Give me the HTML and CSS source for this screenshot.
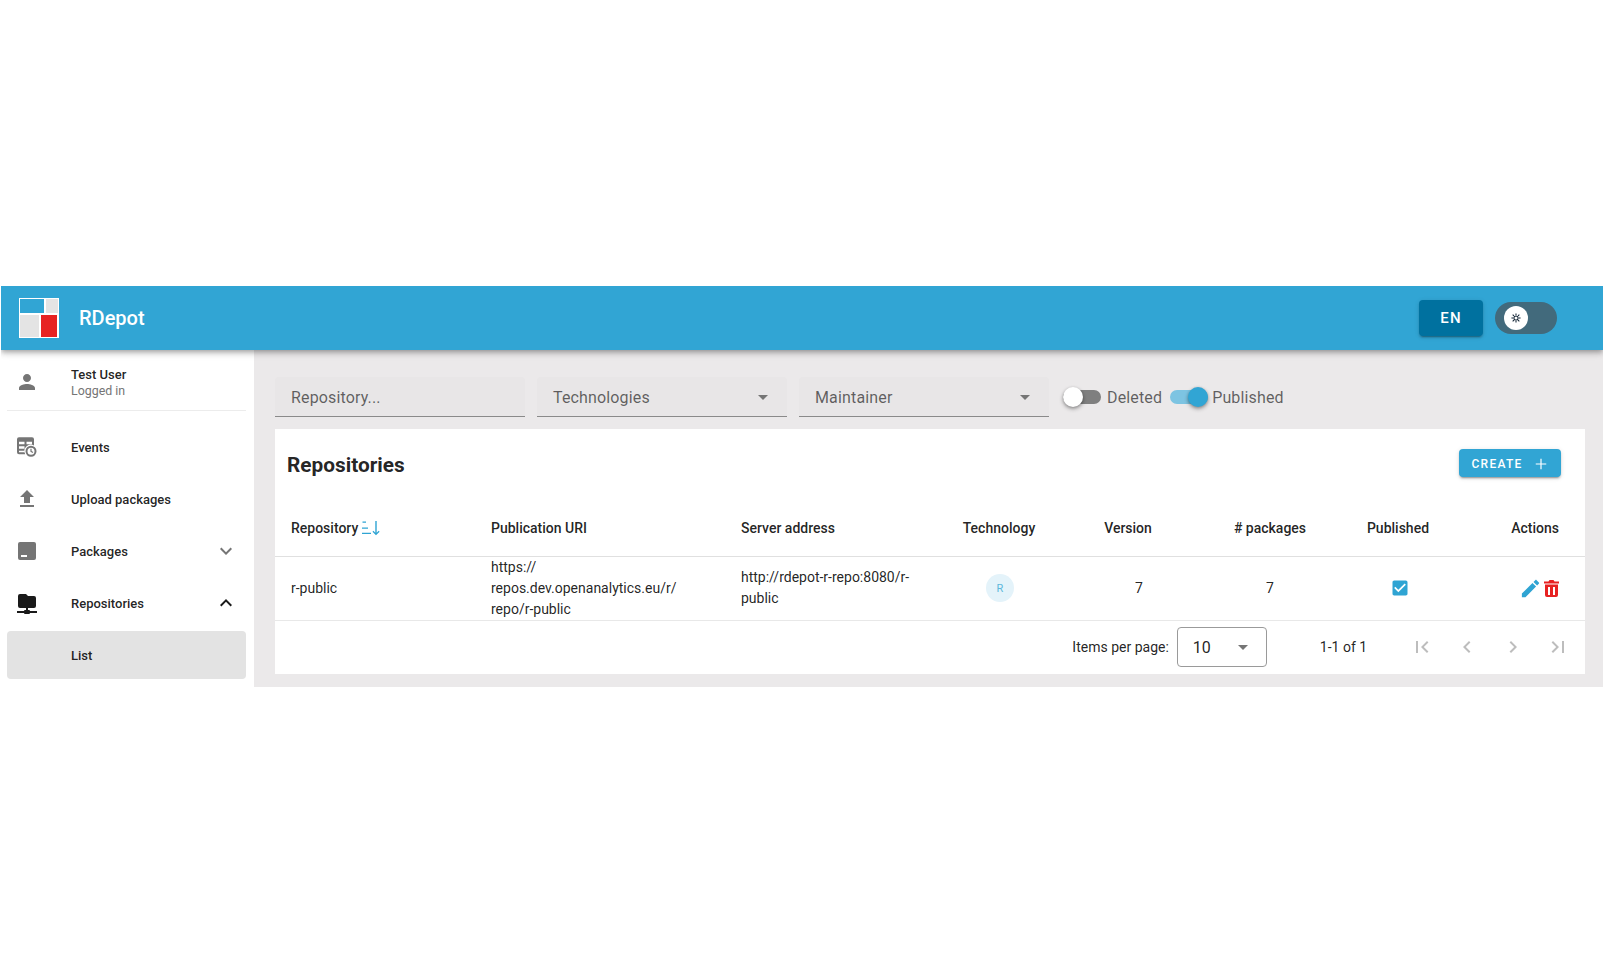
FILE: index.html
```html
<!DOCTYPE html>
<html lang="en">
<head>
<meta charset="utf-8">
<title>RDepot</title>
<link rel="stylesheet" href="styles.css">
</head>
<body>
<div class="app">
  <header class="topbar">
    <div class="logo">
      <div class="logo-row top"><span class="l-blue"></span><span class="l-grey-a"></span></div>
      <div class="logo-row bottom"><span class="l-grey-b"></span><span class="l-red"></span></div>
    </div>
    <div class="brand">RDepot</div>
    <div class="spacer"></div>
    <button class="lang">EN</button>
    <div class="theme">
      <span class="theme-knob">
        <svg width="10" height="10" viewBox="0 0 24 24" fill="none" stroke="#123" stroke-width="2.500"><circle cx="12" cy="12" r="5"/><path d="M12 1v4M12 19v4M1 12h4M19 12h4M4 4l3 3M17 17l3 3M4 20l3-3M17 7l3-3"/></svg>
      </span>
    </div>
  </header>
  <div class="body">
    <aside class="sidebar">
      <div class="user">
        <svg class="nav-icon" viewBox="0 0 24 24" fill="#757575"><path d="M12 12c2.21 0 4-1.79 4-4s-1.79-4-4-4-4 1.79-4 4 1.79 4 4 4zm0 2c-2.67 0-8 1.34-8 4v2h16v-2c0-2.66-5.33-4-8-4z"/></svg>
        <div class="user-text">
          <div class="user-name">Test User</div>
          <div class="user-sub">Logged in</div>
        </div>
      </div>
      <nav class="nav">
        <div class="nav-item">
          <svg class="nav-icon" viewBox="1 0.750 24 24" fill="#757575"><path fill-rule="evenodd" d="M3 5a2 2 0 0 1 2-2h13a2 2 0 0 1 2 2v6.200a6.500 6.500 0 0 0-8.800 8.800H5a2 2 0 0 1-2-2zm2 2.500v2.500h5.500V7.500zm7.500 0v2.500H18V7.500zM5 12v2.500h5.500V12zM5 16.500V18h5.500v-1.500z"/><path fill-rule="evenodd" d="M17 11.500a5.500 5.500 0 1 1 0 11 5.500 5.500 0 0 1 0-11zm0 2a3.500 3.500 0 1 0 0 7 3.500 3.500 0 0 0 0-7zm-.6 1h1.200v2.300l1.700 1-.6 1-2.300-1.400z"/></svg>
          <span>Events</span>
        </div>
        <div class="nav-item">
          <svg class="nav-icon" viewBox="0 0 24 24" fill="#757575"><path d="M9 16h6v-6h4l-7-7-7 7h4zm-4 2h14v2H5z"/></svg>
          <span>Upload packages</span>
        </div>
        <div class="nav-item">
          <svg class="nav-icon" viewBox="0 0 24 24" fill="#757575"><path fill-rule="evenodd" d="M5 3h14a2 2 0 0 1 2 2v14a2 2 0 0 1-2 2H5a2 2 0 0 1-2-2V5a2 2 0 0 1 2-2zm1 13v2h6v-2z"/></svg>
          <span>Packages</span>
          <svg class="chev" viewBox="0 0 24 24" fill="#757575"><path d="M16.590 8.590L12 13.170 7.410 8.590 6 10l6 6 6-6z"/></svg>
        </div>
        <div class="nav-item">
          <svg class="nav-icon" viewBox="0 0 24 24" fill="#1a1a1a"><path d="M3,15V5A2,2 0 0,1 5,3H11L13,5H19A2,2 0 0,1 21,7V15A2,2 0 0,1 19,17H13V19H14A1,1 0 0,1 15,20H22V22H15A1,1 0 0,1 14,23H10A1,1 0 0,1 9,22H2V20H9A1,1 0 0,1 10,19H11V17H5A2,2 0 0,1 3,15Z"/></svg>
          <span>Repositories</span>
          <svg class="chev" viewBox="0 0 24 24" fill="#1a1a1a"><path d="M12 8l-6 6 1.410 1.410L12 10.830l4.590 4.580L18 14z"/></svg>
        </div>
        <div class="nav-item active"><span>List</span></div>
      </nav>
    </aside>
    <main class="main">
      <div class="filters">
        <div class="field">Repository...</div>
        <div class="field">Technologies<span class="caret"></span></div>
        <div class="field">Maintainer<span class="caret"></span></div>
        <div class="switch off"><span class="track"></span><span class="knob"></span></div>
        <span class="switch-label">Deleted</span>
        <div class="switch on"><span class="track"></span><span class="knob"></span></div>
        <span class="switch-label">Published</span>
      </div>
      <section class="card">
        <div class="card-head">
          <h1>Repositories</h1>
          <button class="create">CREATE
            <svg width="18" height="18" viewBox="0 0 24 24" fill="#fff"><path d="M19 12.800h-6.200V19h-1.600v-6.200H5v-1.600h6.200V5h1.600v6.200H19z"/></svg>
          </button>
        </div>
        <table class="grid">
          <colgroup>
            <col class="c1"><col class="c2"><col class="c3"><col class="c4"><col class="c5"><col class="c6"><col class="c7"><col class="c8">
          </colgroup>
          <thead>
            <tr>
              <th>Repository <svg class="sort" width="20" height="18" viewBox="0 0 20 18" fill="#2fa4d3"><path d="M1.500 2.500h3.500v1.200H1.500zM1 8.500h6v1.200H1zM1 13.700h9v1.300H1zM14.300 2h1.400v11.800l2-2 .9.900-3.600 3.600-3.500-3.600.9-.900 1.900 2z"/></svg></th>
              <th>Publication URI</th>
              <th>Server address</th>
              <th class="center">Technology</th>
              <th class="center">Version</th>
              <th class="center">&#35; packages</th>
              <th class="center">Published</th>
              <th class="right">Actions</th>
            </tr>
          </thead>
          <tbody>
            <tr>
              <td>r-public</td>
              <td>https://<br>repos.dev.openanalytics.eu/r/<br>repo/r-public</td>
              <td>http://rdepot-r-repo:8080/r-<br>public</td>
              <td class="center chip-c"><span class="chip">R</span></td>
              <td class="center ver-c">7</td>
              <td class="center">7</td>
              <td class="center pub-c">
                <svg class="cell-icon" viewBox="0 0 24 24" fill="#2fa4d3"><path d="M19 3H5c-1.110 0-2 .9-2 2v14c0 1.100.89 2 2 2h14c1.110 0 2-.9 2-2V5c0-1.100-.89-2-2-2zm-9 14l-5-5 1.410-1.410L10 14.170l7.590-7.590L19 8l-9 9z"/></svg>
              </td>
              <td class="right">
                <div class="actions">
                  <svg class="edit" viewBox="0 0 24 24" fill="#2fa4d3"><path d="M3 17.250V21h3.750L17.810 9.940l-3.750-3.750L3 17.250zM20.710 7.040c.39-.39.39-1.020 0-1.410l-2.340-2.340c-.39-.39-1.020-.39-1.410 0l-1.830 1.830 3.750 3.750 1.830-1.830z"/></svg>
                  <svg class="del" viewBox="0 0 15 17" fill="#e72222"><path fill-rule="evenodd" d="M0 1.500h4.500l1-1.500h4l1 1.500H15v2H0zM1 4.500h13v10.500a2 2 0 0 1-2 2H3a2 2 0 0 1-2-2zM4 7v8h2V7zm5 0v8h2V7z"/></svg>
                </div>
              </td>
            </tr>
          </tbody>
        </table>
        <div class="pager">
          <span class="per-label">Items per page:</span>
          <div class="per-select"><span>10</span><span class="caret"></span></div>
          <span class="range">1-1 of 1</span>
          <svg class="pg" viewBox="0 0 24 24"><path d="M18.410 16.590L13.820 12l4.590-4.590L17 6l-6 6 6 6zM6 6h2v12H6z"/></svg>
          <svg class="pg" viewBox="0 0 24 24"><path d="M15.410 7.410L14 6l-6 6 6 6 1.410-1.410L10.830 12z"/></svg>
          <svg class="pg" viewBox="0 0 24 24"><path d="M10 6L8.590 7.410 13.170 12l-4.580 4.590L10 18l6-6z"/></svg>
          <svg class="pg" viewBox="0 0 24 24"><path d="M5.590 7.410L10.180 12l-4.590 4.590L7 18l6-6-6-6zM16 6h2v12h-2z"/></svg>
        </div>
      </section>
    </main>
  </div>
</div>
</body>
</html>
```

FILE: styles.css
```css
* { box-sizing: border-box; }
html, body { margin: 0; background: #fff; }
body { padding: 286px 2px 0 1px; font-family: Roboto, "Liberation Sans", sans-serif; color: rgba(0,0,0,.87); min-height: 973px; }
.app { display: flex; flex-direction: column; }

.topbar { position: relative; z-index: 2; height: 64px; background: #31a5d4; display: flex; align-items: center; padding: 0 46px 0 18px; box-shadow: 0 2px 4px -1px rgba(0,0,0,.2), 0 4px 5px rgba(0,0,0,.14), 0 1px 10px rgba(0,0,0,.12); clip-path: inset(0 0 -20px 0); color: #fff; }
.logo { width: 40px; height: 40px; background: #fff; padding: 1px; display: flex; flex-direction: column; gap: 2px; }
.logo-row { display: flex; gap: 2px; }
.logo-row span { display: block; }
.top { height: 14px; }
.bottom { flex: 1; padding-right: 1px; }
.l-blue { width: 24px; background: #31a5d4; }
.l-grey-a { flex: 1; background: #e4e4e4; }
.l-grey-b { width: 19px; background: #e4e4e4; }
.l-red { flex: 1; background: #e72222; }
.brand { margin-left: 20px; font-size: 20px; font-weight: 500; }
.spacer { flex: 1; }
.lang { width: 64px; height: 36px; border: 0; border-radius: 4px; background: #00719f; color: #fff; font: 500 15px Roboto, sans-serif; letter-spacing: 1.25px; box-shadow: 0 3px 1px -2px rgba(0,0,0,.2), 0 2px 2px rgba(0,0,0,.14), 0 1px 5px rgba(0,0,0,.12); }
.theme { width: 62px; height: 32px; margin-left: 12px; border-radius: 16px; background: #426a7c; display: flex; align-items: center; padding-left: 9px; }
.theme-knob { width: 24px; height: 24px; border-radius: 50%; background: #fff; display: flex; align-items: center; justify-content: center; }

.body { display: flex; height: 337px; }
.sidebar { width: 253px; background: #fff; padding: 0 8px 0 6px; flex: none; }
.user { height: 61px; display: flex; align-items: center; border-bottom: 1px solid #ececec; padding: 4px 0 0 8px; }
.nav-icon { width: 24px; height: 24px; flex: none; }
.user-text { margin: 2px 0 0 32px; font-size: 13px; line-height: 16px; }
.user-name { font-weight: 500; }
.user-sub { color: #757575; font-size: 12.400px; }
.nav { padding-top: 12px; display: flex; flex-direction: column; gap: 4px; }
.nav-item { height: 48px; display: flex; align-items: center; padding: 0 8px; font-size: 13px; font-weight: 500; border-radius: 4px; color: rgba(0,0,0,.87); }
.nav-item > span { margin-left: 32px; flex: 1; }
.nav-item.active { background: #e3e3e3; padding-left: 64px; }
.nav-item.active > span { margin-left: 0; }
.chev { width: 24px; height: 24px; flex: none; }

.main { flex: 1; background: #ebe9ea; padding: 27px 18px 13px 21px; min-width: 0; }
.filters { display: flex; align-items: center; height: 40px; margin-bottom: 12px; color: rgba(0,0,0,.6); font-size: 16px; letter-spacing: .15px; }
.field { width: 250px; height: 40px; margin-right: 12px; padding: 1px 16px 0; display: flex; align-items: center; justify-content: space-between; background: #e8e6e7; border-bottom: 1px solid #8a8a8a; border-radius: 4px 4px 0 0; }
.caret { width: 0; height: 0; border-left: 5px solid transparent; border-right: 5px solid transparent; border-top: 5px solid #757575; margin-right: 3px; }
.switch { position: relative; width: 38px; height: 20px; flex: none; }
.track { position: absolute; left: 0; right: 0; top: 3px; height: 14px; border-radius: 7px; }
.knob { position: absolute; top: 0; width: 20px; height: 20px; border-radius: 50%; box-shadow: 0 2px 4px rgba(0,0,0,.3), 0 1px 3px rgba(0,0,0,.2); }
.off { margin-left: 2px; }
.off .track { background: #7f7f7f; }
.off .knob { left: 0; background: #fff; }
.on .track { background: #7dc4e2; }
.on .knob { right: 0; background: #31a5d4; }
.switch-label { margin: 0 8px 0 6px; }
.on + .switch-label { margin-left: 4px; }

.card { background: #fff; height: 245px; display: flex; flex-direction: column; }
.card-head { height: 71px; display: flex; align-items: center; justify-content: space-between; padding: 0 24px 0 12px; }
.card-head h1 { margin: 0; font-size: 20.800px; font-weight: 700; }
.create { height: 28px; width: 102px; margin-bottom: 4px; border: 0; border-radius: 4px; background: #31a5d4; color: #fff; font: 500 12px Roboto, sans-serif; letter-spacing: 1.250px; display: flex; align-items: center; justify-content: center; gap: 10px; box-shadow: 0 3px 1px -2px rgba(0,0,0,.2), 0 2px 2px rgba(0,0,0,.14), 0 1px 5px rgba(0,0,0,.12); padding: 2px 0 0 2px; }

.grid { width: 100%; border-collapse: collapse; table-layout: fixed; font-size: 14px; }
.c1 { width: 200px; } .c2 { width: 250px; } .c3 { width: 221px; } .c4 { width: 106px; }
.c5 { width: 152px; } .c6 { width: 132px; } .c7 { width: 124px; } .c8 { width: 125px; }
.grid th { height: 56px; padding: 0 16px; text-align: left; font-weight: 500; border-bottom: 1px solid #e0e0e0; white-space: nowrap; }
.grid td { height: 64px; padding: 0 16px; line-height: 21px; border-bottom: 1px solid #e8e8e8; }
.grid th.center, .grid td.center { text-align: center; padding: 0; }
.grid td.ver-c { padding-left: 22px; }
.grid td.pub-c { padding-left: 4px; }
.grid td.chip-c { padding-left: 2px; }
.grid th.right, .grid td.right { text-align: right; padding-right: 26px; }
.sort { vertical-align: -4px; margin-left: -1px; }
.chip { display: inline-flex; width: 28px; height: 28px; border-radius: 50%; align-items: center; justify-content: center; background: #e4f3fa; color: #5eb8dc; font-size: 11px; }
.cell-icon { display: block; width: 20px; height: 20px; margin: 0 auto; }
.actions { display: flex; justify-content: flex-end; align-items: center; gap: 2px; }
.edit { width: 23px; height: 23px; }
.del { width: 15px; height: 17px; }

.pager { flex: 1; display: flex; align-items: center; justify-content: flex-end; padding-right: 15px; font-size: 14px; }
.per-select { width: 90px; height: 40px; margin-left: 8px; padding: 0 16px 0 15px; font-size: 16px; border: 1px solid #9a9a9a; border-radius: 4px; display: flex; align-items: center; justify-content: space-between; }
.per-select .caret { margin-right: 2px; }
.range { margin: 0 17px 0 53px; width: 52px; white-space: nowrap; }
.pg { width: 24px; height: 24px; fill: #bdbdbd; margin-left: 21.300px; }
```
